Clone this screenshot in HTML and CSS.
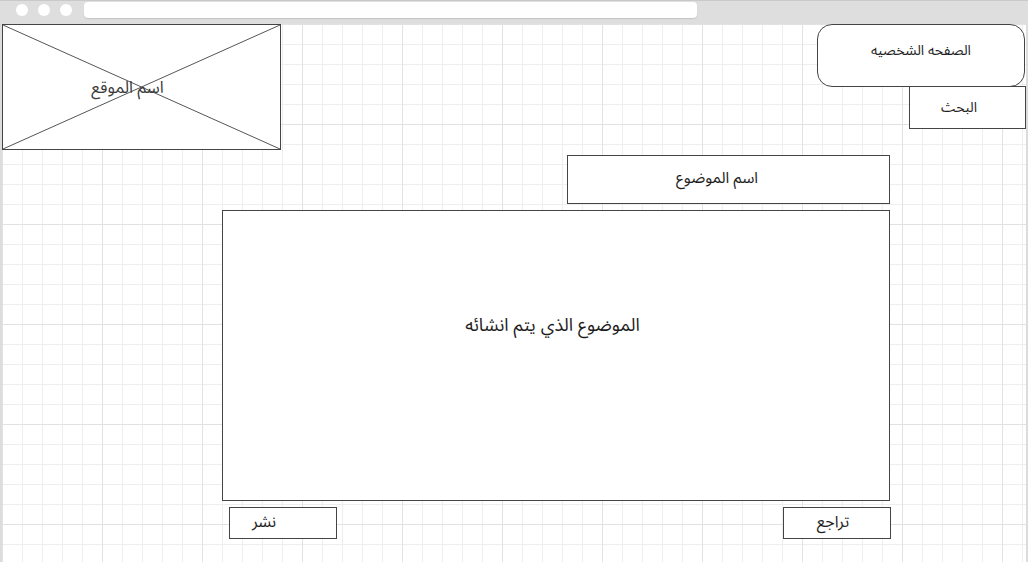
FILE: index.html
```html
<!DOCTYPE html>
<html lang="ar">
<head>
<meta charset="utf-8">
<title>Wireframe</title>
<link rel="stylesheet" href="styles.css">
</head>
<body>
<div class="window">
  <div class="chrome">
    <span class="dot"></span>
    <span class="dot"></span>
    <span class="dot"></span>
    <span class="address"></span>
  </div>
  <div class="canvas">
    <div class="header">
      <div class="logo">
        <svg class="cross" viewBox="0 0 279 126" preserveAspectRatio="none" aria-hidden="true">
          <line x1="0" y1="0" x2="279" y2="126"/>
          <line x1="279" y1="0" x2="0" y2="126"/>
        </svg>
        <span class="logo-text">اسم الموقع</span>
      </div>
      <div class="nav">
        <div class="profile"><span>الصفحه الشخصيه</span></div>
        <div class="search"><span>البحث</span></div>
      </div>
    </div>
    <div class="editor">
      <div class="topic"><span>اسم الموضوع</span></div>
      <div class="body-box"><span>الموضوع الذي يتم انشائه</span></div>
      <div class="actions">
        <div class="btn btn-publish"><span>نشر</span></div>
        <div class="btn btn-back"><span>تراجع</span></div>
      </div>
    </div>
  </div>
</div>
</body>
</html>
```

FILE: styles.css
```css
* { box-sizing: border-box; }
html, body { margin: 0; padding: 0; background: #fff; }
body {
  font-family: "Liberation Sans", "Noto Sans Arabic", "DejaVu Sans", Arial, sans-serif;
  color: #1e1e1e;
}
.window {
  width: 1028px;
  height: 562px;
  overflow: hidden;
}
.chrome {
  height: 24px;
  background: #dedede;
  border-top: 1px solid #c9c9c9;
  display: flex;
  align-items: flex-start;
  padding: 1px 0 0 16px;
  gap: 10px;
}
.dot {
  width: 12px;
  height: 12px;
  border-radius: 50%;
  background: #fff;
  margin-top: 2px;
}
.address {
  width: 613px;
  height: 16px;
  margin-left: 2px;
  background: #fff;
  border-radius: 4px;
  box-shadow: 0 1px 1px #c4c4c4;
}
.canvas {
  height: 538px;
  border-left: 2px solid #dcdcdc;
  border-right: 2px solid #dcdcdc;
  background-color: #fff;
  background-image:
    linear-gradient(to right, #e2e2e2 1px, transparent 1px),
    linear-gradient(to bottom, #e2e2e2 1px, transparent 1px),
    linear-gradient(to right, #eeeeee 1px, transparent 1px),
    linear-gradient(to bottom, #eeeeee 1px, transparent 1px);
  background-size: 100px 100px, 100px 100px, 20px 20px, 20px 20px;
}
.header {
  display: flex;
  justify-content: space-between;
  align-items: flex-start;
  height: 126px;
}
.logo {
  width: 279px;
  height: 126px;
  border: 1px solid #444;
  background: #fff;
  display: grid;
  place-items: center;
}
.cross {
  grid-area: 1 / 1;
  width: 277px;
  height: 124px;
  display: block;
}
.cross line { stroke: #555; stroke-width: 1; vector-effect: non-scaling-stroke; }
.logo-text {
  grid-area: 1 / 1;
  font-size: 16.5px;
  color: #3a3a3a;
  padding-right: 28px;
}
.nav {
  width: 209px;
  display: flex;
  flex-direction: column;
  align-items: flex-end;
}
.profile {
  width: 208px;
  height: 63px;
  margin-right: 1px;
  border: 1px solid #444;
  border-radius: 15px;
  background: #fff;
  display: flex;
  justify-content: center;
  align-items: center;
  padding-bottom: 11px;
  font-size: 14px;
}
.search {
  width: 117px;
  height: 43px;
  margin-top: -1px;
  border: 1px solid #444;
  background: #fff;
  display: flex;
  justify-content: center;
  align-items: center;
  padding-right: 17px;
  font-size: 14px;
}
.editor {
  width: 669px;
  margin-left: 220px;
  display: flex;
  flex-direction: column;
  align-items: flex-end;
}
.topic {
  width: 323px;
  height: 49px;
  margin-top: 5px;
  margin-right: 1px;
  border: 1px solid #444;
  background: #fff;
  display: flex;
  justify-content: center;
  align-items: center;
  padding: 0 23px 3px 0;
  font-size: 15.5px;
}
.body-box {
  width: 668px;
  height: 291px;
  margin-top: 6px;
  margin-right: 1px;
  border: 1px solid #444;
  background: #fff;
  display: flex;
  justify-content: center;
  align-items: flex-start;
  padding: 95px 7px 0 0;
  font-size: 18px;
}
.actions {
  width: 662px;
  margin-top: 6px;
  display: flex;
  justify-content: space-between;
}
.btn {
  width: 108px;
  height: 32px;
  border: 1px solid #444;
  background: #fff;
  display: flex;
  justify-content: center;
  align-items: center;
  padding-bottom: 2px;
  font-size: 16px;
}
.btn-publish { padding-right: 38px; }
.btn-back { padding-right: 8px; }
```
